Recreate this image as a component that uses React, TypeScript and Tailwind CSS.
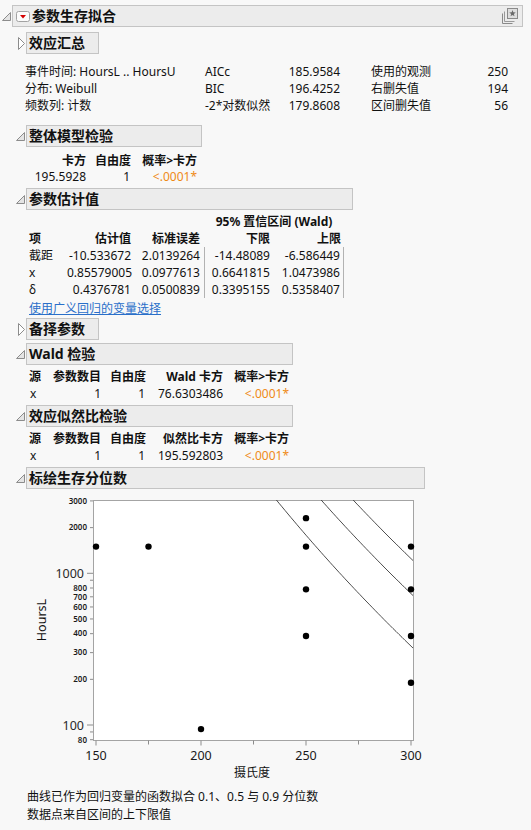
import React from "react";

const SVG_FONT = "Noto Sans, Noto Sans CJK SC, sans-serif";

function OpenTri() {
  return (
    <svg width="9" height="9" viewBox="0 0 9 9" className="shrink-0">
      <polygon points="0.5,8.5 8.5,8.5 8.5,0.5" fill="#e4e4e4" stroke="#8c8c8c" strokeWidth="1" />
    </svg>
  );
}

function ClosedTri() {
  return (
    <svg width="7" height="13" viewBox="0 0 7 13" className="shrink-0">
      <polygon points="0.5,0.5 6.5,6.5 0.5,12.5" fill="#ffffff" stroke="#8c8c8c" strokeWidth="1" />
    </svg>
  );
}

function Head({ title, open, w, mt }: { title: string; open?: boolean; w: string; mt: string }) {
  return (
    <div className={`flex items-center pl-[16px] ${mt}`}>
      <div className="w-[10px] h-[22px] flex items-center">
        {open ? (
          <OpenTri />
        ) : (
          <span className="ml-[2px] flex">
            <ClosedTri />
          </span>
        )}
      </div>
      <div
        className={`h-[22px] border border-[#c4c4c4] bg-[#ececec] pl-[2px] text-[14px] font-bold leading-[20px] whitespace-nowrap ${w}`}
      >
        {title}
      </div>
    </div>
  );
}

function StarIcon() {
  const cx = 11.5;
  const cy = 6.5;
  const pts: string[] = [];
  for (let i = 0; i < 10; i++) {
    const r = i % 2 === 0 ? 3.4 : 1.4;
    const a = -Math.PI / 2 + (i * Math.PI) / 5;
    pts.push(`${(cx + r * Math.cos(a)).toFixed(2)},${(cy + r * Math.sin(a)).toFixed(2)}`);
  }
  return (
    <svg width="18" height="18" viewBox="0 0 18 18">
      <path d="M1.5 6.5 V16.5 H11.5" fill="none" stroke="#8a8a8a" />
      <path d="M3.5 4.5 V14.5 H13.5" fill="none" stroke="#9a9a9a" />
      <rect x="6.5" y="1.5" width="10" height="10" fill="#dedede" stroke="#8a8a8a" />
      <polygon points={pts.join(" ")} fill="#6a6a6a" />
    </svg>
  );
}

function DropIcon() {
  return (
    <svg width="14" height="11" viewBox="0 0 14 11">
      <rect x="0.5" y="0.5" width="13" height="10" rx="2" fill="#fbfbfb" stroke="#a2a2a2" />
      <polygon points="4,4 10,4 7,7.5" fill="#d40000" />
    </svg>
  );
}

const summary = [
  ["事件时间: HoursL .. HoursU", "AICc", "185.9584", "使用的观测", "250"],
  ["分布: Weibull", "BIC", "196.4252", "右删失值", "194"],
  ["频数列: 计数", "-2*对数似然", "179.8608", "区间删失值", "56"],
];

const estimates = [
  ["截距", "-10.533672", "2.0139264", "-14.48089", "-6.586449"],
  ["x", "0.85579005", "0.0977613", "0.6641815", "1.0473986"],
  ["δ", "0.4376781", "0.0500839", "0.3395155", "0.5358407"],
];

// plot geometry (page coordinates)
const X = (t: number) => 96 + 2.1 * (t - 150);
const Y = (v: number) => 725 - 151.7 * (Math.log10(v) - 2);
const uOf = (x: number) => 1 / (150 + (x - 96) / 2.1 + 273.15);
const uR = uOf(413);
const K = 665000;

function quantileLine(yR: number) {
  const pts: string[] = [];
  for (let x = 93; x <= 414; x += 3) {
    const y = yR - K * (uOf(x) - uR);
    pts.push(`${x},${y.toFixed(1)}`);
  }
  return pts.join(" ");
}

const points: [number, number][] = [
  [150, 1500],
  [175, 1500],
  [200, 94],
  [250, 2310],
  [250, 1500],
  [250, 784],
  [250, 386],
  [300, 1500],
  [300, 784],
  [300, 386],
  [300, 190],
];

const smallY = [3000, 2000, 800, 700, 600, 500, 400, 300, 200, 80];
const bigY = [1000, 100];
const minorY = [900, 90];

function Plot() {
  return (
    <svg width="430" height="299" viewBox="0 489 430 299" className="block" fontFamily={SVG_FONT}>
      <defs>
        <clipPath id="frame">
          <rect x="93" y="500" width="320" height="240" />
        </clipPath>
      </defs>
      <rect x="93.5" y="500.5" width="320" height="240" fill="#ffffff" stroke="#a4a4a4" />
      <g clipPath="url(#frame)" fill="none" stroke="#3a3a3a" strokeWidth="0.9">
        <polyline points={quantileLine(648)} />
        <polyline points={quantileLine(595.5)} />
        <polyline points={quantileLine(560.5)} />
      </g>
      {points.map(([t, v], i) => (
        <circle key={i} cx={X(t)} cy={Y(v)} r="3.2" fill="#000" />
      ))}
      {/* y axis */}
      {smallY.map((v) => (
        <g key={v}>
          <line x1="90" x2="93" y1={Y(v)} y2={Y(v)} stroke="#8c8c8c" />
          <text x="87" y={Y(v)} dy="0.35em" textAnchor="end" fontSize="8" fontWeight="600" fill="#1a1a1a">
            {v}
          </text>
        </g>
      ))}
      {bigY.map((v) => (
        <g key={v}>
          <line x1="87" x2="93" y1={Y(v)} y2={Y(v)} stroke="#8c8c8c" />
          <text x="84" y={Y(v)} dy="0.36em" textAnchor="end" fontSize="12.5" fill="#2a2a2a">
            {v}
          </text>
        </g>
      ))}
      {minorY.map((v) => (
        <line key={v} x1="90" x2="93" y1={Y(v)} y2={Y(v)} stroke="#8c8c8c" />
      ))}
      {/* x axis */}
      {[150, 175, 200, 225, 250, 275, 300].map((t) => (
        <line
          key={t}
          x1={X(t)}
          x2={X(t)}
          y1="740.5"
          y2={t % 50 === 0 ? 745.5 : 744.5}
          stroke="#8c8c8c"
        />
      ))}
      {[150, 200, 250, 300].map((t) => (
        <text key={t} x={X(t)} y="755" dy="0.36em" textAnchor="middle" fontSize="12.5" fill="#1a1a1a">
          {t}
        </text>
      ))}
      <text x="252" y="773" dy="0.36em" textAnchor="middle" fontSize="12" fill="#111">
        摄氏度
      </text>
      <text
        x="41"
        y="620"
        dy="0.36em"
        textAnchor="middle"
        fontSize="12.5"
        fill="#111"
        transform="rotate(-90 41 620)"
      >
        HoursL
      </text>
    </svg>
  );
}

export default function App() {
  return (
    <div className="w-[531px] h-[830px] overflow-hidden bg-[#f8f8f8] pt-[5px] text-[#111] font-['Noto_Sans','Noto_Sans_CJK_SC',sans-serif]">
      {/* main header */}
      <div className="flex items-center">
        <div className="w-[12px] pl-[2px] flex items-center">
          <OpenTri />
        </div>
        <div className="w-[511px] h-[22px] border border-[#c4c4c4] bg-[#ececec] flex items-center">
          <span className="ml-[3px] flex">
            <DropIcon />
          </span>
          <span className="ml-[2px] text-[14px] font-bold leading-[20px]">参数生存拟合</span>
          <span className="ml-auto mr-[3px] flex">
            <StarIcon />
          </span>
        </div>
      </div>

      <Head title="效应汇总" w="w-[73px]" mt="mt-[5px]" />
      <div className="mt-[9px] pl-[25px] text-[12px] leading-[17px]">
        {summary.map((r) => (
          <div key={r[0]} className="flex">
            <div className="w-[180px] whitespace-nowrap">{r[0]}</div>
            <div className="w-[135px] flex justify-between whitespace-nowrap">
              <span>{r[1]}</span>
              <span>{r[2]}</span>
            </div>
            <div className="ml-[31px] w-[137px] flex justify-between whitespace-nowrap">
              <span>{r[3]}</span>
              <span>{r[4]}</span>
            </div>
          </div>
        ))}
      </div>

      <Head title="整体模型检验" open w="w-[176px]" mt="mt-[11px]" />
      <div className="mt-[6px] pl-[30px] text-[12px] leading-[16px]">
        <div className="grid grid-cols-[56px_45px_66px] text-right font-bold">
          <div>卡方</div>
          <div>自由度</div>
          <div>概率&gt;卡方</div>
        </div>
        <div className="grid grid-cols-[56px_45px_66px] text-right">
          <div>195.5928</div>
          <div className="pr-[1px]">1</div>
          <div className="text-[#ef8a17]">&lt;.0001*</div>
        </div>
      </div>

      <Head title="参数估计值" open w="w-[327px]" mt="mt-[3px]" />
      <div className="mt-[3px] pl-[29px] text-[12px] leading-[17px]">
        <div className="grid grid-cols-[38px_64px_73px_140px] font-bold">
          <div />
          <div />
          <div />
          <div className="text-center whitespace-nowrap">95% 置信区间 (Wald)</div>
        </div>
        <div className="grid grid-cols-[38px_64px_73px_66px_74px] font-bold">
          <div>项</div>
          <div className="text-right">估计值</div>
          <div className="text-right pr-[4px]">标准误差</div>
          <div className="text-right">下限</div>
          <div className="text-right pr-[3px]">上限</div>
        </div>
        {estimates.map((r) => (
          <div key={r[0]} className="grid grid-cols-[38px_64px_73px_66px_74px]">
            <div>{r[0]}</div>
            <div className="text-right">{r[1]}</div>
            <div className="text-right pr-[4px]">{r[2]}</div>
            <div className="text-right border-l border-[#b2b2b2]">{r[3]}</div>
            <div className="text-right pr-[3px] border-r border-[#b2b2b2]">{r[4]}</div>
          </div>
        ))}
      </div>
      <div className="mt-[3px] pl-[29px] text-[12px] leading-[16px]">
        <span className="text-[#2a6fc9] underline">使用广义回归的变量选择</span>
      </div>

      <Head title="备择参数" w="w-[73px]" mt="mt-[1px]" />

      <Head title="Wald 检验" open w="w-[267px]" mt="mt-[3px]" />
      <div className="mt-[3px] pl-[29px] text-[12px] leading-[17px]">
        <div className="grid grid-cols-[24px_48px_45px_77px_66px] font-bold">
          <div>源</div>
          <div className="text-right">参数数目</div>
          <div className="text-right">自由度</div>
          <div className="text-right">Wald 卡方</div>
          <div className="text-right">概率&gt;卡方</div>
        </div>
        <div className="grid grid-cols-[24px_48px_45px_77px_66px]">
          <div className="pl-[1px]">x</div>
          <div className="text-right">1</div>
          <div className="text-right pr-[1px]">1</div>
          <div className="text-right">76.6303486</div>
          <div className="text-right text-[#ef8a17]">&lt;.0001*</div>
        </div>
      </div>

      <Head title="效应似然比检验" open w="w-[267px]" mt="mt-[3px]" />
      <div className="mt-[3px] pl-[29px] text-[12px] leading-[17px]">
        <div className="grid grid-cols-[24px_48px_45px_77px_66px] font-bold">
          <div>源</div>
          <div className="text-right">参数数目</div>
          <div className="text-right">自由度</div>
          <div className="text-right">似然比卡方</div>
          <div className="text-right">概率&gt;卡方</div>
        </div>
        <div className="grid grid-cols-[24px_48px_45px_77px_66px]">
          <div className="pl-[1px]">x</div>
          <div className="text-right">1</div>
          <div className="text-right pr-[1px]">1</div>
          <div className="text-right">195.592803</div>
          <div className="text-right text-[#ef8a17]">&lt;.0001*</div>
        </div>
      </div>

      <Head title="标绘生存分位数" open w="w-[399px]" mt="mt-[3px]" />
      <Plot />
      <div className="pl-[27px] text-[12px] leading-[18px]">
        <div>曲线已作为回归变量的函数拟合 0.1、0.5 与 0.9 分位数</div>
        <div>数据点来自区间的上下限值</div>
      </div>
    </div>
  );
}
